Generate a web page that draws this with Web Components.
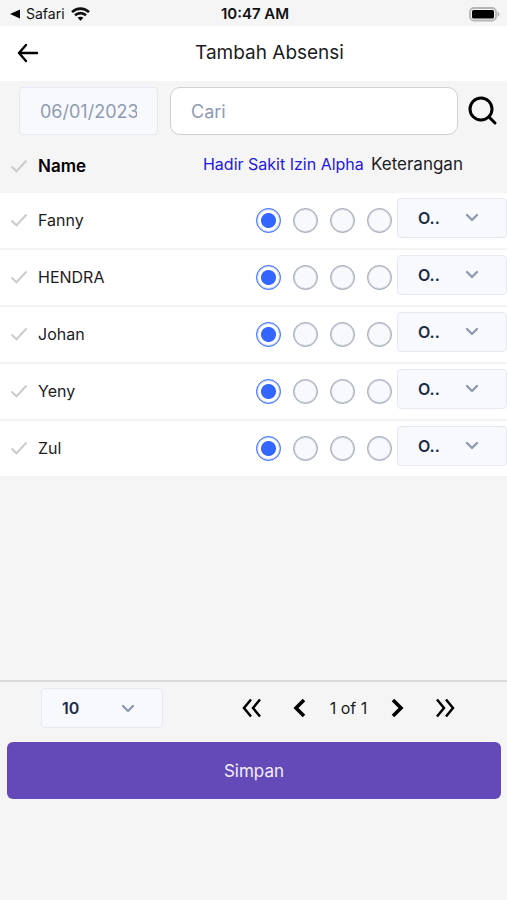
<!DOCTYPE html>
<html lang="id">
<head>
<meta charset="utf-8">
<meta name="viewport" content="width=device-width, initial-scale=1">
<title>Tambah Absensi</title>
<style>
  body { margin: 0; background: #f5f5f5; color: #1c1c1e; font: 16px/24px Inter, "Liberation Sans", sans-serif; }
</style>
</head>
<body>
<absensi-page></absensi-page>

<script>
const define = (name, html, setup) => {
  const template = document.createElement('template');
  template.innerHTML = `<style>*{box-sizing:border-box}svg{display:block;fill:none;stroke:currentColor}button{display:grid;place-items:center;margin:0;padding:0;border:0;background:none;color:inherit;font:inherit;cursor:pointer}</style>` + html;
  customElements.define(name, class extends HTMLElement {
    constructor() {
      super();
      this.attachShadow({ mode: 'open' }).append(template.content.cloneNode(true));
    }
    connectedCallback() {
      if (setup) setup(this, this.shadowRoot);
    }
  });
};

define('status-bar', `
  <style>
    :host { display: grid; grid-template-columns: 1fr auto 1fr; align-items: center; height: 26px; padding: 2px 7px 0 10px; font-size: 14px; line-height: 20px; color: #111; }
    .back { display: flex; align-items: center; gap: 6px; }
    time { font-weight: 600; font-size: 15px; }
    .battery { justify-self: end; }
  </style>
  <div class="back">
    <svg width="10" height="10" viewBox="0 0 10 10"><path d="M0 5 10 .5v9z" fill="#000" stroke="none"/></svg>
    <span>Safari</span>
    <svg width="19" height="14" viewBox="0 0 19 14" stroke="#000" stroke-width="2.6"><path d="M1 5.1c4.8-4.6 12.200-4.600 17 0M4 8.300c3.100-2.900 7.900-2.900 11 0"/><path d="M6.600 10.800c1.600-1.500 4.200-1.500 5.800 0L9.500 13.800z" fill="#000" stroke="none"/></svg>
  </div>
  <time>10:47 AM</time>
  <svg class="battery" width="31" height="15" viewBox="0 0 31 15"><rect x="1" y="1" width="26" height="12.500" rx="4" stroke="#b5b5b5" stroke-width="1.800"/><rect x="3" y="3" width="22" height="8.500" rx="1.500" fill="#000" stroke="none"/><path d="M28.500 4.800c2.600 1 2.600 4 0 5z" fill="#b5b5b5" stroke="none"/></svg>
`);

define('app-bar', `
  <style>
    :host { display: flex; align-items: center; height: 55px; padding-bottom: 1px; padding-right: 24px; background: #fff; }
    button { width: 56px; height: 54px; color: #000; }
    h1 { flex: 1; margin: 0; font-size: 19px; line-height: 24px; font-weight: 400; text-align: center; }
  </style>
  <button type="button" aria-label="Kembali"><svg width="22" height="20" viewBox="0 0 22 20" stroke-width="2.400" stroke-linecap="round" stroke-linejoin="round"><path d="M20 10H2M9 2 2 10l7 8"/></svg></button>
  <h1><slot></slot></h1>
`);

define('filter-bar', `
  <style>
    :host { display: flex; align-items: center; gap: 12px; padding: 6px 9px 6px 19px; }
    input { height: 48px; min-width: 0; margin: 0; padding: 0 20px; font: inherit; font-size: 18px; color: #8f9bb3; outline: 0; }
    input::placeholder { color: #8f9bb3; opacity: 1; }
    .date { width: 139px; border: 1px solid #e4e9f2; border-radius: 4px; background: #f7f9fc; }
    .search { flex: 1; border: 1px solid #d0d0d0; border-radius: 10px; background: #fff; }
    button { margin-left: -2px; width: 30px; height: 30px; color: #000; }
  </style>
  <input class="date" type="text" value="06/01/2023" aria-label="Tanggal" readonly>
  <input class="search" type="text" placeholder="Cari" aria-label="Cari">
  <button type="button" aria-label="Cari"><svg width="30" height="30" viewBox="0 0 30 30" stroke-width="3"><circle cx="13" cy="13" r="11"/><path d="m21 21 6 6" stroke-linecap="round"/></svg></button>
`);

define('row-check', `
  <style>
    :host { display: grid; place-items: center; width: 38px; color: #c9cbcd; }
    input, svg { grid-area: 1 / 1; }
    input { appearance: none; width: 24px; height: 24px; margin: 0; }
    svg { pointer-events: none; }
    input:checked + svg { color: #3366ff; }
  </style>
  <input type="checkbox"><svg width="18" height="14" viewBox="0 0 18 14" stroke-width="2"><path d="m1.500 7.500 5 4.800L16.500 1.500"/></svg>
`, (host, root) => {
  root.querySelector('input').setAttribute('aria-label', host.getAttribute('label'));
});

define('status-choice', `
  <style>
    :host { display: flex; gap: 12px; }
    input { appearance: none; width: 25px; height: 25px; margin: 0; border: 1px solid #9fa5b4; border-radius: 50%; background: #f7f9fc; box-shadow: inset 0 0 0 1px #d3d6de; }
    input:checked { border-color: #3366ff; box-shadow: inset 0 0 0 1px #c3d1ff; background: radial-gradient(circle, #3366ff 7px, #fff 8px); }
  </style>
  <input type="radio" name="status" aria-label="Hadir" checked>
  <input type="radio" name="status" aria-label="Sakit">
  <input type="radio" name="status" aria-label="Izin">
  <input type="radio" name="status" aria-label="Alpha">
`);

define('select-box', `
  <style>
    :host { display: grid; align-items: center; height: 40px; }
    select, svg { grid-area: 1 / 1; }
    select { appearance: none; width: 100%; height: 100%; margin: 0; padding: 0 20px; border: 1px solid #e4e9f2; border-radius: 4px; background: #f7f9fc; color: #222b45; font: inherit; font-size: 16px; font-weight: 600; outline: 0; }
    svg { justify-self: end; margin-right: 28px; color: #8f9bb3; pointer-events: none; }
  </style>
  <select><option></option></select>
  <svg width="14" height="9" viewBox="0 0 14 9" stroke-width="2.400" stroke-linecap="round" stroke-linejoin="round"><path d="m2 2 5 5 5-5"/></svg>
`, (host, root) => {
  root.querySelector('select').setAttribute('aria-label', host.getAttribute('label'));
  root.querySelector('option').textContent = host.getAttribute('value');
});

define('attendance-table', `
  <style>
    :host { display: block; }
    table { width: 100%; border-collapse: separate; border-spacing: 0; table-layout: fixed; }
    th, td { padding: 0; text-align: left; vertical-align: middle; white-space: nowrap; font-weight: 400; }
    thead th { height: 52px; padding-bottom: 6px; }
    thead th:nth-child(-n+2) { padding-bottom: 2px; }
    thead .name { color: #000; font-size: 17px; font-weight: 600; }
    .status { color: #2318e0; }
    .note { font-size: 17px; }
    tbody > tr > * { height: 57px; padding-bottom: 1px; border-bottom: 2px solid #f3f3f3; background: #fff; }
    tbody .pick { padding-bottom: 6px; }
  </style>
  <table>
    <colgroup><col style="width:38px"><col><col style="width:53px"><col style="width:115px"><col style="width:26px"><col style="width:110px"></colgroup>
    <thead><tr>
      <th><row-check label="Pilih semua"></row-check></th>
      <th class="name">Name</th>
      <th class="status" colspan="2">Hadir Sakit Izin Alpha</th>
      <th class="note" colspan="2">Keterangan</th>
    </tr></thead>
    <tbody></tbody>
  </table>
`, (host, root) => {
  root.querySelector('tbody').innerHTML = host.getAttribute('names').split(',').map(name => `
    <tr>
      <td><row-check label="Pilih ${name}"></row-check></td>
      <th scope="row" colspan="2">${name}</th>
      <td colspan="2"><status-choice role="radiogroup" aria-label="Status ${name}"></status-choice></td>
      <td class="pick"><select-box label="Keterangan ${name}" value="O.."></select-box></td>
    </tr>`).join('');
});

define('page-controls', `
  <style>
    :host { display: flex; align-items: center; justify-content: space-between; padding: 6px 50px 8px 41px; border-top: 2px solid #d9d9d9; }
    select-box { width: 122px; }
    nav { display: flex; align-items: center; gap: 24px; }
    button { width: 24px; height: 24px; color: #000; }
    span { width: 73px; margin: 0 -24px; text-align: center; }
  </style>
  <select-box label="Baris per halaman" value="10"></select-box>
  <nav aria-label="Halaman">
    <button type="button" aria-label="Halaman pertama"><svg width="20" height="20" viewBox="0 0 20 20" stroke-width="2.500"><path d="m9 1.500-7 8.500 7 8.500M18 1.500 11 10l7 8.500"/></svg></button>
    <button type="button" aria-label="Sebelumnya"><svg width="20" height="20" viewBox="0 0 20 20" stroke-width="3.600"><path d="m14 2-8 8 8 8"/></svg></button>
    <span>1 of 1</span>
    <button type="button" aria-label="Berikutnya"><svg width="20" height="20" viewBox="0 0 20 20" stroke-width="3.600"><path d="m6 2 8 8-8 8"/></svg></button>
    <button type="button" aria-label="Halaman terakhir"><svg width="20" height="20" viewBox="0 0 20 20" stroke-width="2.500"><path d="m2 1.500 7 8.500-7 8.500M11 1.500l7 8.500-7 8.500"/></svg></button>
  </nav>
`);

define('save-button', `
  <style>
    :host { display: block; padding: 6px 6px 0 7px; }
    button { width: 100%; height: 57px; border-radius: 6px; background: #634ab8; color: #f3effc; font-size: 17px; }
  </style>
  <button type="button"><slot></slot></button>
`);

define('absensi-page', `
  <style>
    :host { display: flex; flex-direction: column; min-height: 100vh; }
    main { flex: 1; }
    footer { padding-bottom: 101px; }
  </style>
  <status-bar></status-bar>
  <app-bar>Tambah Absensi</app-bar>
  <main>
    <filter-bar></filter-bar>
    <attendance-table names="Fanny,HENDRA,Johan,Yeny,Zul"></attendance-table>
  </main>
  <footer>
    <page-controls></page-controls>
    <save-button>Simpan</save-button>
  </footer>
`);
</script>
</body>
</html>
